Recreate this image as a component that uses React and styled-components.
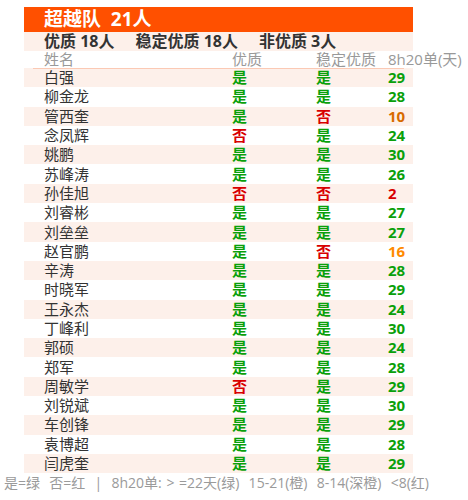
import styled, { createGlobalStyle } from "styled-components";

const rows = [
  ["白强", true, true, 29],
  ["柳金龙", true, true, 28],
  ["管西奎", true, false, 10],
  ["念凤辉", false, true, 24],
  ["姚鹏", true, true, 30],
  ["苏峰涛", true, true, 26],
  ["孙佳旭", false, false, 2],
  ["刘睿彬", true, true, 27],
  ["刘垒垒", true, true, 27],
  ["赵官鹏", true, false, 16],
  ["辛涛", true, true, 28],
  ["时晓军", true, true, 29],
  ["王永杰", true, true, 24],
  ["丁峰利", true, true, 30],
  ["郭硕", true, true, 24],
  ["郑军", true, true, 28],
  ["周敏学", false, true, 29],
  ["刘锐斌", true, true, 30],
  ["车创锋", true, true, 29],
  ["袁博超", true, true, 28],
  ["闫虎奎", true, true, 29],
];

const dayColor = (d) => {
  if (d >= 22) return "#0aa00a";
  if (d >= 15) return "#ff8a00";
  if (d >= 8) return "#d86a00";
  return "#d80000";
};

const GlobalStyle = createGlobalStyle`
  body {
    margin: 0;
    background: #fff;
    font-family: "Open Sans", "Noto Sans CJK SC", sans-serif;
  }
`;

const Page = styled.div`
  width: 468px;
  height: 500px;
  padding-top: 7px;
  box-sizing: border-box;
  overflow: hidden;
`;

const Board = styled.div`
  margin-left: 24px;
  width: 389px;
`;

const Title = styled.div`
  height: 25px;
  background: #ff5000;
  color: #fff;
  font-size: 19px;
  font-weight: 700;
  line-height: 25px;
  padding-left: 20px;
  white-space: pre;
`;

const Summary = styled.div`
  height: 19px;
  background: #fdf0ea;
  display: flex;
  align-items: center;
  gap: 21px;
  padding-left: 20px;
  font-size: 16px;
  font-weight: 700;
  line-height: 19px;
  color: #333;
  white-space: nowrap;
`;

const Grid = styled.div`
  display: grid;
  grid-template-columns: 188px 84px 72px 1fr;
  padding-left: 20px;
  align-items: center;
`;

const HeadRow = styled(Grid)`
  height: 17px;
  font-size: 15px;
  line-height: 17px;
  color: #999;
  white-space: nowrap;
  position: relative;

  &::after {
    content: "";
    position: absolute;
    left: 9px;
    width: 371px;
    bottom: -1px;
    height: 1px;
    background: #fbc9b4;
  }
`;

const Row = styled(Grid)`
  height: 19.3px;
  font-size: 15px;
  line-height: 19px;
  background: ${(p) => (p.$shade ? "#fdf0ea" : "#fff")};
`;

const Name = styled.div`
  color: #333;
`;

const Flag = styled.div`
  font-weight: 700;
  color: ${(p) => (p.$ok ? "#0aa00a" : "#d80000")};
`;

const Days = styled.div`
  font-weight: 700;
  color: ${(p) => p.$color};
`;

const Legend = styled.div`
  margin-top: 1px;
  padding-left: 4px;
  font-size: 14px;
  line-height: 18px;
  word-spacing: 1px;
  color: #9a9a9a;
  white-space: pre;
`;

export default function App() {
  return (
    <Page>
      <GlobalStyle />
      <Board>
        <Title>{"超越队  21人"}</Title>
        <Summary>
          <span>优质 18人</span>
          <span>稳定优质 18人</span>
          <span>非优质 3人</span>
        </Summary>
        <HeadRow>
          <div>姓名</div>
          <div>优质</div>
          <div>稳定优质</div>
          <div>8h20单(天)</div>
        </HeadRow>
        {rows.map(([name, q, s, d], i) => (
          <Row key={name} $shade={i % 2 === 0}>
            <Name>{name}</Name>
            <Flag $ok={q}>{q ? "是" : "否"}</Flag>
            <Flag $ok={s}>{s ? "是" : "否"}</Flag>
            <Days $color={dayColor(d)}>{d}</Days>
          </Row>
        ))}
      </Board>
      <Legend>{"是=绿  否=红  |  8h20单: > =22天(绿)  15-21(橙)  8-14(深橙)  <8(红)"}</Legend>
    </Page>
  );
}
